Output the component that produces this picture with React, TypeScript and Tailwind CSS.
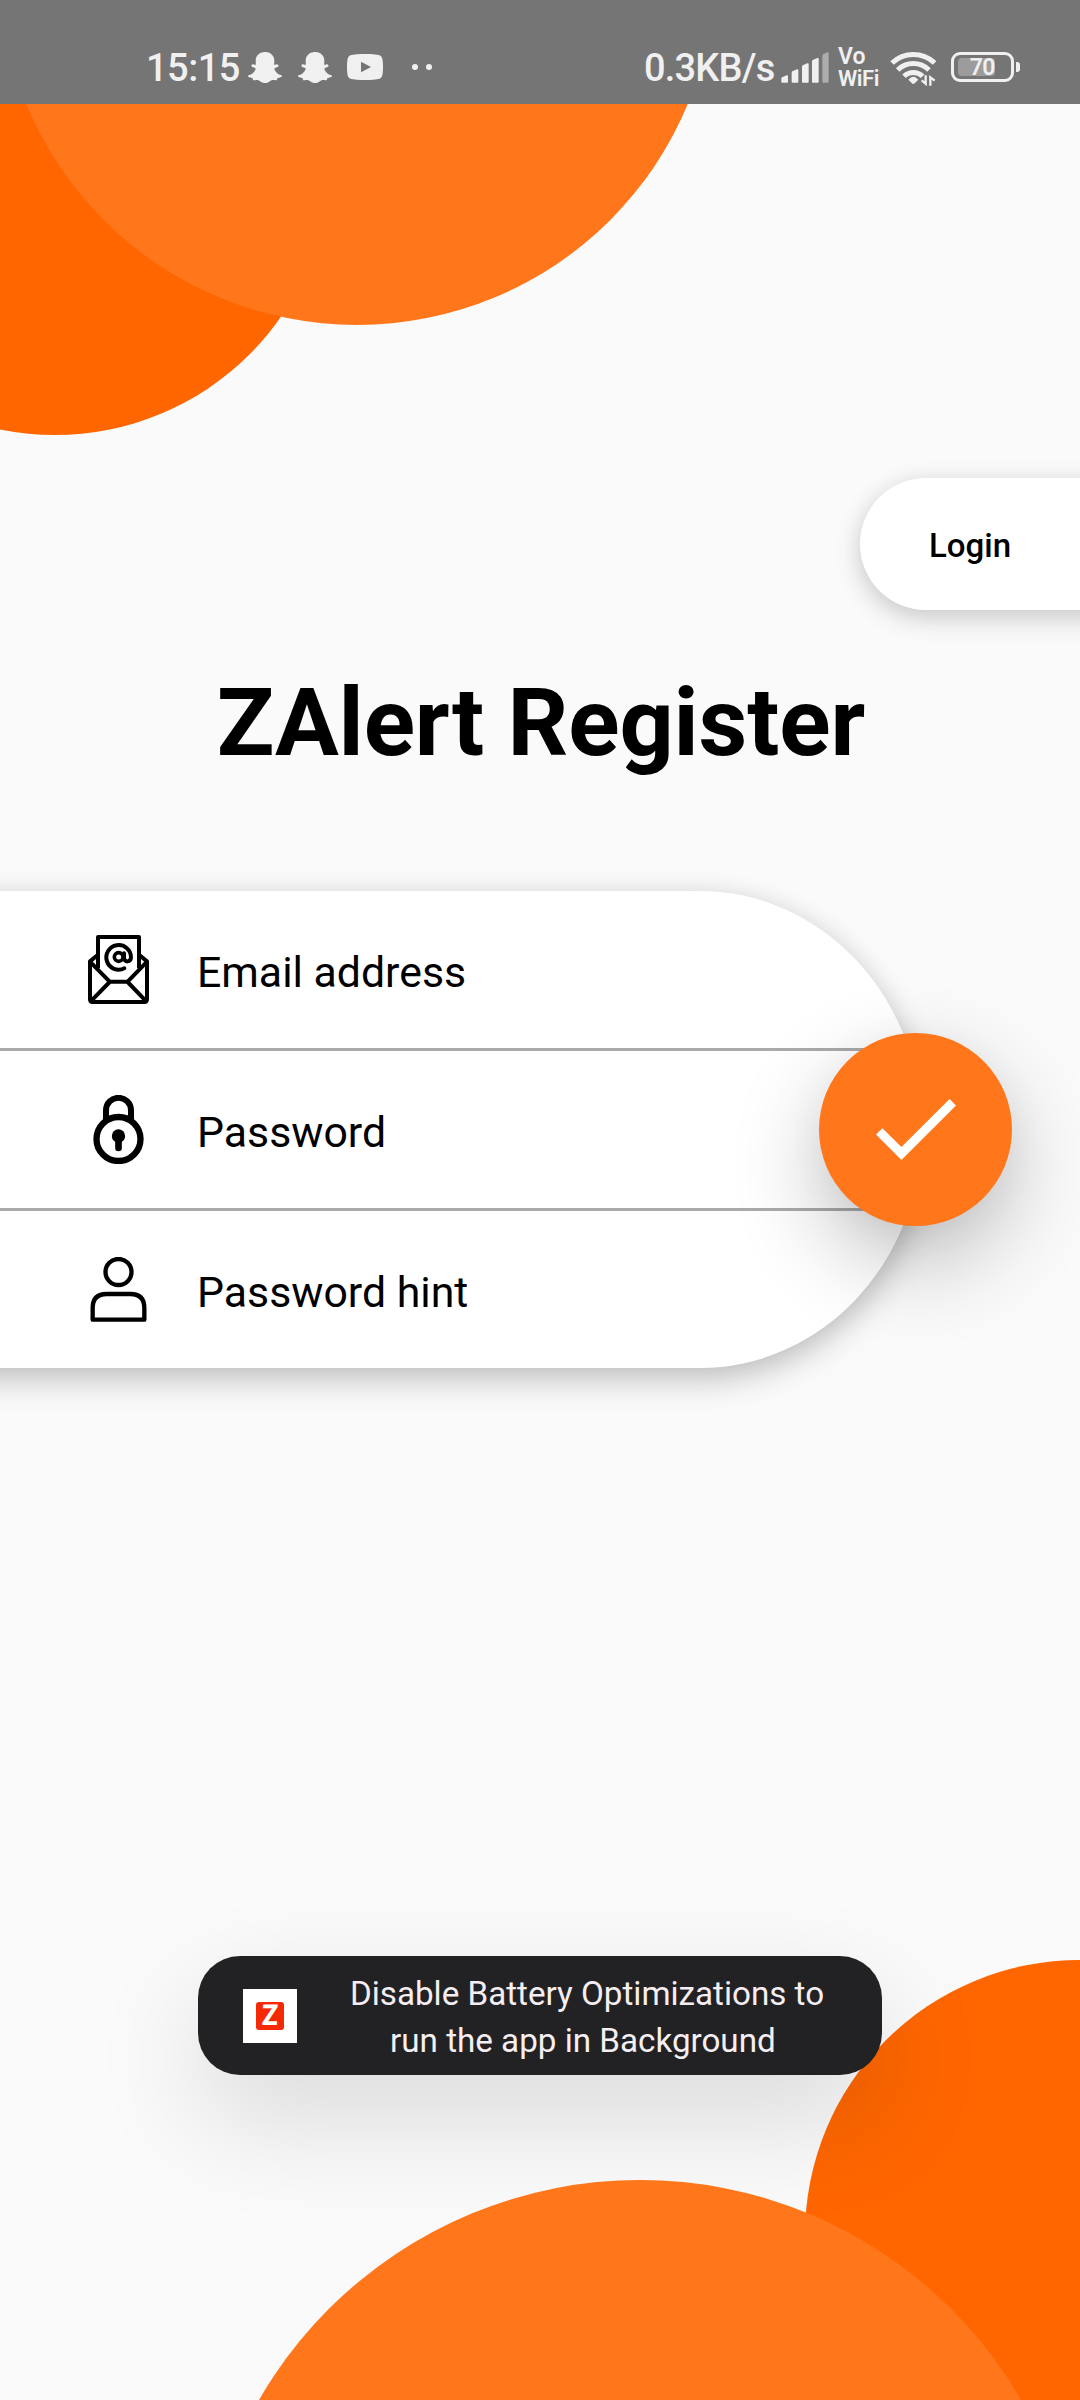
import React from "react";
import { FaSnapchatGhost } from "react-icons/fa";

function StatusBar() {
  return (
    <header className="relative z-10 flex h-[104px] shrink-0 items-start bg-[#757575] pl-[146px] pt-[46px] text-[#f0f0f0]">
      <span className="mt-[1px] w-[102px] shrink-0 whitespace-nowrap text-[38px] font-medium leading-[42px] tracking-[-0.5px]">15:15</span>
      <FaSnapchatGhost className="mt-[5px] h-[33px] w-[34px] shrink-0" preserveAspectRatio="none" />
      <FaSnapchatGhost className="ml-[16px] mt-[5px] h-[33px] w-[34px] shrink-0" preserveAspectRatio="none" />
      <svg className="ml-[15px] mt-[8px] h-[26px] w-[36px] shrink-0" viewBox="0 0 108 78">
        <path
          fill="currentColor"
          fillRule="evenodd"
          d="M18 2C40-1 68-1 90 2 102 3 106 9 107 20 108.500 32 108.500 46 107 58 106 69 102 75 90 76 68 79 40 79 18 76 6 75 2 69 1 58-.5 46-.5 32 1 20 2 9 6 3 18 2zM42 23V55L72 39z"
        />
      </svg>
      <span className="ml-[29px] mt-[18px] h-[6px] w-[6px] rounded-full bg-[#f0f0f0]" />
      <span className="ml-[8px] mt-[18px] h-[6px] w-[6px] rounded-full bg-[#f0f0f0]" />
      <span className="ml-[212px] mt-[1px] w-[137px] shrink-0 whitespace-nowrap text-[38px] font-medium leading-[42px] tracking-[-0.8px]">0.3KB/s</span>
      <svg className="mt-[6px] h-[31px] w-[48px] shrink-0" viewBox="454 66 144 93" fill="currentColor">
        <path d="M455 146q0-4 4-5l12-5q4-2 4 3v16q0 3-3 3h-14q-3 0-3-3z" />
        <path d="M486 128q0-4 4-5l12-5q4-2 4 3v34q0 3-3 3h-14q-3 0-3-3z" />
        <path d="M517 110q0-4 4-5l12-5q4-2 4 3v52q0 3-3 3h-14q-3 0-3-3z" />
        <path d="M547 94q0-4 4-5l12-5q4-2 4 3v68q0 3-3 3h-14q-3 0-3-3z" />
        <path opacity=".45" d="M578 77q0-4 4-5l11-5q4-2 4 3v85q0 3-3 3h-13q-3 0-3-3z" />
      </svg>
      <span className="ml-[9px] flex w-[44px] shrink-0 flex-col text-[22px] font-semibold leading-[22px]">
        <span className="text-[23px]">Vo</span>
        <span className="tracking-[-0.5px]">WiFi</span>
      </span>
      <svg className="ml-[8px] mt-[4px] h-[36px] w-[46px] shrink-0" viewBox="779 60 138 108" fill="none" stroke="currentColor" strokeWidth="15">
        <path d="M785 99A93 93 0 0 1 913 99" />
        <path d="M802 120A67 67 0 0 1 896 120" />
        <path d="M821 139A40 40 0 0 1 877 139" />
        <path fill="currentColor" stroke="none" d="M834 149Q849 132 864 149L853 160Q849 164 845 160z" />
        <path strokeWidth="7" d="M886 136V161L874 151M900 167V142L913 152" />
      </svg>
      <span className="ml-[15px] mt-[6px] flex h-[30px] w-[63px] shrink-0 items-center rounded-[9px] border-[3px] border-[#f0f0f0] pl-[4px]">
        <span className="flex h-[18px] w-[37px] items-center justify-end rounded-[4px] bg-[#9c9c9c] text-[23px] font-semibold leading-none tracking-[-0.5px]">70</span>
      </span>
      <span className="ml-[2px] mt-[16px] h-[10px] w-[4px] rounded-r-[3px] bg-[#f0f0f0]" />
    </header>
  );
}

function EmailIcon() {
  return (
    <svg className="h-[69px] w-[61px]" viewBox="84 105 183 207" fill="none" stroke="#000" strokeWidth="12" strokeLinejoin="round" strokeLinecap="round">
      <path d="M114 205V111H237V205" strokeLinecap="butt" />
      <path d="M113 165L90 184V298Q90 306 98 306H253Q261 306 261 298V184L238 165" />
      <path d="M92 187L149 245H203L259 187M95 301L149 246M256 301L203 246" strokeWidth="12" />
      <path d="M193 205A37 37 0 1 1 213 172C213 188 192 188 192 173V160" strokeWidth="12" />
      <circle cx="176" cy="171" r="13" strokeWidth="11" />
    </svg>
  );
}

function LockIcon() {
  return (
    <svg className="h-[69px] w-[51px]" viewBox="99 585 153 207" fill="none" stroke="#000" strokeWidth="18">
      <circle cx="175.500" cy="717" r="66" strokeWidth="19" />
      <path d="M138 662V631A37.500 37.500 0 0 1 213 631V662" />
      <circle cx="175.500" cy="708" r="20" fill="#000" stroke="none" />
      <path d="M175.500 712V744" strokeWidth="20" strokeLinecap="round" />
    </svg>
  );
}

function PersonIcon() {
  return (
    <svg className="h-[65px] w-[57px]" viewBox="90 1071 171 195" fill="none" stroke="#000" strokeWidth="13" strokeLinejoin="round">
      <circle cx="175.500" cy="1116" r="39" />
      <path d="M98 1259V1224Q98 1182 140 1182H211Q253 1182 253 1224V1259z" />
    </svg>
  );
}

const fields = [
  { label: "Email address", icon: <EmailIcon />, row: "border-b-[3px] h-[160px]", iconBox: "mt-[44px]" },
  { label: "Password", icon: <LockIcon />, row: "border-b-[3px] h-[160px]", iconBox: "mt-[44px]" },
  { label: "Password hint", icon: <PersonIcon />, row: "h-[157px]", iconBox: "mt-[46px]" },
];

function RegisterForm() {
  return (
    <section className="relative mt-[104px] w-[922px]">
      <div className="-ml-[80px] overflow-hidden bg-white pl-[80px] shadow-[0_12px_32px_rgba(0,0,0,0.22),0_0_24px_rgba(0,0,0,0.05)] [border-bottom-right-radius:222px_238.5px] [border-top-right-radius:222px_238.5px]">
        {fields.map((f) => (
          <div key={f.label} className={`-ml-[80px] flex items-start border-[#aaaaaa] pl-[80px] ${f.row}`}>
            <span className={`ml-[82px] flex w-[73px] shrink-0 justify-center ${f.iconBox}`}>{f.icon}</span>
            <span className="ml-[42px] mt-[55px] text-[42.8px] leading-[52px] text-black">{f.label}</span>
          </div>
        ))}
      </div>
      <button className="absolute left-[819px] top-[142px] flex h-[193px] w-[193px] items-center justify-center rounded-full bg-[#ff761b] shadow-[0_36px_90px_rgba(0,0,0,0.24),0_6px_40px_rgba(0,0,0,0.04)]">
        <svg className="h-[61px] w-[80px]" viewBox="3.410 5.590 17.590 13.410" fill="#fff">
          <path d="M9 16.170L4.830 12l-1.420 1.410L9 19 21 7l-1.410-1.410z" />
        </svg>
      </button>
    </section>
  );
}

function Toast() {
  return (
    <div className="absolute left-[198px] top-[1956px] flex h-[119px] w-[684px] items-center rounded-[42px] bg-[#222224] shadow-[0_44px_110px_rgba(0,0,0,0.13)]">
      <span className="ml-[45px] flex h-[54px] w-[54px] shrink-0 items-center justify-center bg-white">
        <span className="flex h-[28px] w-[28px] items-center justify-center rounded-[3px] bg-[#f52a04] text-[29px] font-black leading-none text-white">
          <span className="-skew-x-3 scale-x-90">Z</span>
        </span>
      </span>
      <p className="ml-[40px] mt-[2px] w-[500px] whitespace-pre text-center text-[33.2px] leading-[47px] text-[#f5eef2]">
        Disable Battery Optimizations to
        <br />
        {"run the app in Background\u00a0"}
      </p>
    </div>
  );
}

export default function App() {
  return (
    <div className="relative flex h-[2400px] w-[1080px] flex-col overflow-hidden bg-[#fafafa] font-['Roboto',sans-serif] text-black">
      <div className="absolute left-[-220px] top-[-115px] h-[550px] w-[550px] rounded-full bg-[#ff6600]" />
      <div className="absolute left-[-1px] top-[-391px] h-[716px] w-[716px] rounded-full bg-[#ff761b]" />
      <div className="absolute left-[805px] top-[1960px] h-[550px] w-[550px] rounded-full bg-[#ff6600]" />

      <StatusBar />

      <main className="relative flex flex-col">
        <button className="-mr-[60px] mt-[374px] flex h-[132px] w-[280px] items-center self-end rounded-l-full bg-white pl-[69px] pt-[3px] text-[33px] font-medium shadow-[0_9px_26px_rgba(0,0,0,0.17),0_0_22px_rgba(0,0,0,0.05)]">
          Login
        </button>
        <h1 className="mt-[49px] whitespace-nowrap pl-[2px] text-center text-[95px] font-bold leading-[128px] tracking-[-0.1px]">ZAlert Register</h1>
        <RegisterForm />
      </main>

      <Toast />
      <div className="absolute left-[200px] top-[2180px] h-[880px] w-[880px] rounded-full bg-[#ff761b]" />
    </div>
  );
}
